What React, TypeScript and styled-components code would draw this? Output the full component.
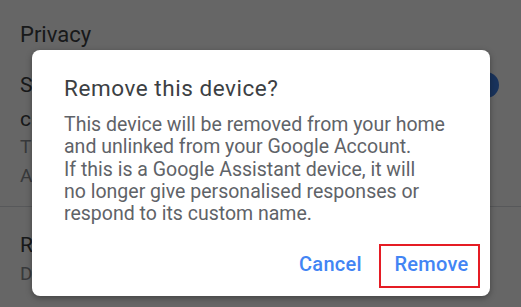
import React from 'react';
import styled, { createGlobalStyle } from 'styled-components';

const GlobalStyle = createGlobalStyle`
    html, body {
        margin: 0;
        padding: 0;
        background: #ffffff;
        font-family: Roboto, "Noto Sans", "Liberation Sans", sans-serif;
    }
`;

const Screen = styled.div`
    position: relative;
    width: 521px;
    height: 307px;
    overflow: hidden;
    background: #ffffff;
`;

const Settings = styled.div`
    padding: 21px 22px 0 20px;
    color: #3c4043;
`;

const SectionTitle = styled.div`
    font-size: 22px;
    line-height: 28px;
    color: #3c4043;
`;

const Row = styled.div<{ $gap?: number }>`
    display: flex;
    align-items: center;
    justify-content: space-between;
    margin-top: ${p => p.$gap ?? 0}px;
`;

const Primary = styled.div<{ $lh?: number; $gap?: number }>`
    font-size: 21px;
    line-height: ${p => p.$lh ?? 28}px;
    margin-top: ${p => p.$gap ?? 0}px;
    color: #3c4043;
    white-space: nowrap;
`;

const Secondary = styled.div`
    font-size: 19px;
    line-height: 29px;
    color: #8d9094;
    white-space: nowrap;
`;

const Divider = styled.div`
    height: 1px;
    background: #dadce0;
    margin: 16px -22px 24px -20px;
`;

const Switch = styled.span`
    position: relative;
    display: block;
    width: 34px;
    height: 14px;
    border-radius: 7px;
    background: #8ab4f8;
    margin-right: 6px;
`;

const Knob = styled.span`
    position: absolute;
    right: -6px;
    top: -6px;
    width: 26px;
    height: 26px;
    border-radius: 50%;
    background: #3f7fe6;
`;

const Scrim = styled.div`
    position: absolute;
    inset: 0;
    background: rgba(0, 0, 0, 0.6);
`;

const Dialog = styled.div`
    position: absolute;
    left: 32px;
    top: 50px;
    width: 458px;
    height: 246px;
    box-sizing: border-box;
    display: flex;
    flex-direction: column;
    padding: 24px 10px 8px 32px;
    background: #ffffff;
    border-radius: 8px;
    box-shadow: 0 2px 6px rgba(0, 0, 0, 0.35);
`;

const DialogTitle = styled.h2`
    margin: 0;
    font-size: 22.5px;
    font-weight: 400;
    letter-spacing: 0.55px;
    line-height: 28px;
    color: #3c4043;
`;

const DialogBody = styled.p`
    margin: 12px 0 0;
    font-size: 19.5px;
    line-height: 22.3px;
    color: #5f6368;
`;

const Actions = styled.div`
    margin-top: auto;
    display: flex;
    justify-content: flex-end;
    align-items: center;
    gap: 9px;
`;

const ActionButton = styled.button<{ $marked?: boolean }>`
    height: 44px;
    box-sizing: border-box;
    padding: ${p => (p.$marked ? '0 0 5px 4px' : '0 8px 5px')};
    width: ${p => (p.$marked ? '101px' : 'auto')};
    border: ${p => (p.$marked ? '2px solid #e51c24' : 'none')};
    background: transparent;
    font-family: Roboto, "Noto Sans", "Liberation Sans", sans-serif;
    font-size: 20px;
    font-weight: 500;
    letter-spacing: 0.3px;
    color: #4285f4;
    cursor: pointer;
`;

export default function App() {
    return (
        <>
            <GlobalStyle />
            <Screen>
                <Settings>
                    <SectionTitle>Privacy</SectionTitle>
                    <Row $gap={22}>
                        <Primary>Share usage data</Primary>
                        <Switch>
                            <Knob />
                        </Switch>
                    </Row>
                    <Primary $lh={26} $gap={7}>crash reports</Primary>
                    <Secondary>This helps</Secondary>
                    <Secondary>All devices</Secondary>
                    <Divider />
                    <Primary>Remove</Primary>
                    <Secondary>Device</Secondary>
                </Settings>
                <Scrim />
                <Dialog role="dialog">
                    <DialogTitle>Remove this device?</DialogTitle>
                    <DialogBody>
                        This device will be removed from your home
                        <br />
                        and unlinked from your Google Account.
                        <br />
                        If this is a Google Assistant device, it will
                        <br />
                        no longer give personalised responses or
                        <br />
                        respond to its custom name.
                    </DialogBody>
                    <Actions>
                        <ActionButton>Cancel</ActionButton>
                        <ActionButton $marked>Remove</ActionButton>
                    </Actions>
                </Dialog>
            </Screen>
        </>
    );
}
